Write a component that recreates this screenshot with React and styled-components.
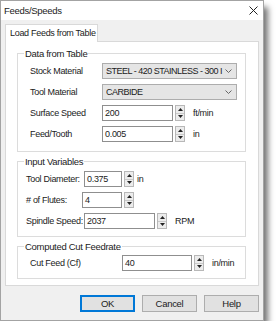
import styled, { createGlobalStyle } from "styled-components";

const Global = createGlobalStyle`
  html, body { margin: 0; background: #fff; }
  body {
    font-family: "Liberation Sans", Arial, sans-serif;
    font-size: 9px;
    letter-spacing: -0.3px;
    color: #1b1b1b;
  }
`;

const Window = styled.div`
  width: 264px;
  height: 321px;
  box-sizing: border-box;
  background: #f0f0f0;
  border: 1px solid #a3a3a3;
  box-shadow: 5px 6px 6px -1px rgba(0, 0, 0, 0.55);
  display: flex;
  flex-direction: column;
`;

const TitleBar = styled.div`
  height: 19px;
  flex: none;
  background: #fff;
  display: flex;
  align-items: center;
  justify-content: space-between;
  padding: 0 5px 0 3px;
  font-size: 9.5px;
`;

const Body = styled.div`
  flex: 1;
  display: flex;
  flex-direction: column;
  padding: 4px 4px 0 4px;
`;

const TabStrip = styled.div`
  display: flex;
  height: 17px;
`;

const Tab = styled.div`
  position: relative;
  z-index: 1;
  width: 93px;
  box-sizing: border-box;
  border: 1px solid #d9d9d9;
  border-bottom: none;
  background: #fff;
  padding: 3px 0 0 4px;
  margin-bottom: -1px;
  height: 18px;
`;

const Panel = styled.div`
  border: 1px solid #d9d9d9;
  background: #fff;
  padding: 6px 12px 6px 11px;
  display: flex;
  flex-direction: column;
  gap: 4px;
`;

const Group = styled.fieldset`
  margin: 0;
  min-width: 0;
  border: 1px solid #dcdcdc;
  padding: ${(p) => p.$top}px 0 ${(p) => p.$bottom}px 6px;
  display: flex;
  flex-direction: column;
  gap: 5px;
`;

const Legend = styled.legend`
  padding: 0 1px;
  line-height: 11px;
  font-size: 9.5px;
`;

const Row = styled.div`
  display: flex;
  align-items: center;
  height: 16px;
  padding-left: ${(p) => p.$indent}px;
`;

const Label = styled.span`
  flex: none;
  width: ${(p) => p.$w}px;
  white-space: nowrap;
`;

const Combo = styled.div`
  width: 135px;
  height: 16px;
  box-sizing: border-box;
  border: 1px solid #adadad;
  background: #e5e5e5;
  display: flex;
  align-items: center;
  padding: 0 4px 0 3px;
  gap: 2px;
`;

const ComboText = styled.span`
  flex: 1;
  overflow: hidden;
  white-space: nowrap;
  letter-spacing: -0.5px;
`;

const Input = styled.div`
  width: ${(p) => p.$w}px;
  height: 16px;
  box-sizing: border-box;
  border: 1px solid #8f8f8f;
  background: #fff;
  padding: 1px 0 0 2px;
  line-height: 13px;
`;

const Spinner = styled.div`
  width: 10px;
  height: 16px;
  margin-left: 2px;
  box-sizing: border-box;
  border: 1px solid #b8b8b8;
  display: flex;
  flex-direction: column;
`;

const SpinHalf = styled.div`
  flex: 1;
  background: #ececec;
  display: flex;
  align-items: center;
  justify-content: center;
  & + & {
    border-top: 1px solid #c9c9c9;
  }
`;

const Unit = styled.span`
  margin-left: ${(p) => p.$gap}px;
  white-space: nowrap;
`;

const Buttons = styled.div`
  display: flex;
  justify-content: flex-end;
  gap: 7px;
  margin-top: 9px;
`;

const Button = styled.div`
  width: 55px;
  height: 17px;
  box-sizing: border-box;
  background: #e1e1e1;
  border: 1px solid ${(p) => (p.$primary ? "#0078d7" : "#adadad")};
  box-shadow: ${(p) => (p.$primary ? "inset 0 0 0 1px #0078d7" : "none")};
  display: flex;
  align-items: center;
  justify-content: center;
  font-size: 9.5px;
`;

function Arrow({ up }) {
  return (
    <svg width="5" height="3" viewBox="0 0 5 3">
      <polygon points={up ? "0,3 5,3 2.5,0" : "0,0 5,0 2.5,3"} fill="#222" />
    </svg>
  );
}

function Spin() {
  return (
    <Spinner>
      <SpinHalf>
        <Arrow up />
      </SpinHalf>
      <SpinHalf>
        <Arrow />
      </SpinHalf>
    </Spinner>
  );
}

function Field({ w, value, unit, gap = 8 }) {
  return (
    <>
      <Input $w={w}>{value}</Input>
      <Spin />
      {unit && <Unit $gap={gap}>{unit}</Unit>}
    </>
  );
}

function Chevron() {
  return (
    <svg width="7" height="4" viewBox="0 0 7 4">
      <polyline points="0.5,0.5 3.5,3.5 6.5,0.5" fill="none" stroke="#666" strokeWidth="1" />
    </svg>
  );
}

export default function App() {
  return (
    <>
      <Global />
      <Window>
        <TitleBar>
          <span>Feeds/Speeds</span>
          <svg width="9" height="9" viewBox="0 0 9 9">
            <path d="M0.5 0.5L8.5 8.5M8.5 0.5L0.5 8.5" stroke="#222" strokeWidth="1" />
          </svg>
        </TitleBar>
        <Body>
          <TabStrip>
            <Tab>Load Feeds from Table</Tab>
          </TabStrip>
          <Panel>
            <Group $top={4} $bottom={9}>
              <Legend>Data from Table</Legend>
              <Row $indent={6}>
                <Label $w={72}>Stock Material</Label>
                <Combo>
                  <ComboText>STEEL - 420 STAINLESS - 300 I</ComboText>
                  <Chevron />
                </Combo>
              </Row>
              <Row $indent={6}>
                <Label $w={72}>Tool Material</Label>
                <Combo>
                  <ComboText>CARBIDE</ComboText>
                  <Chevron />
                </Combo>
              </Row>
              <Row $indent={6}>
                <Label $w={72}>Surface Speed</Label>
                <Field w={71} value="200" unit="ft/min" />
              </Row>
              <Row $indent={6}>
                <Label $w={72}>Feed/Tooth</Label>
                <Field w={71} value="0.005" unit="in" />
              </Row>
            </Group>
            <Group $top={4} $bottom={7}>
              <Legend>Input Variables</Legend>
              <Row $indent={2}>
                <Label $w={58}>Tool Diameter:</Label>
                <Field w={38} value="0.375" unit="in" gap={3} />
              </Row>
              <Row $indent={2}>
                <Label $w={56}># of Flutes:</Label>
                <Field w={40} value="4" />
              </Row>
              <Row $indent={2}>
                <Label $w={58}>Spindle Speed:</Label>
                <Field w={71} value="2037" unit="RPM" />
              </Row>
            </Group>
            <Group $top={3} $bottom={7}>
              <Legend>Computed Cut Feedrate</Legend>
              <Row $indent={6}>
                <Label $w={92}>Cut Feed (Cf)</Label>
                <Field w={70} value="40" unit="in/min" />
              </Row>
            </Group>
          </Panel>
          <Buttons>
            <Button $primary>OK</Button>
            <Button>Cancel</Button>
            <Button>Help</Button>
          </Buttons>
        </Body>
      </Window>
    </>
  );
}
